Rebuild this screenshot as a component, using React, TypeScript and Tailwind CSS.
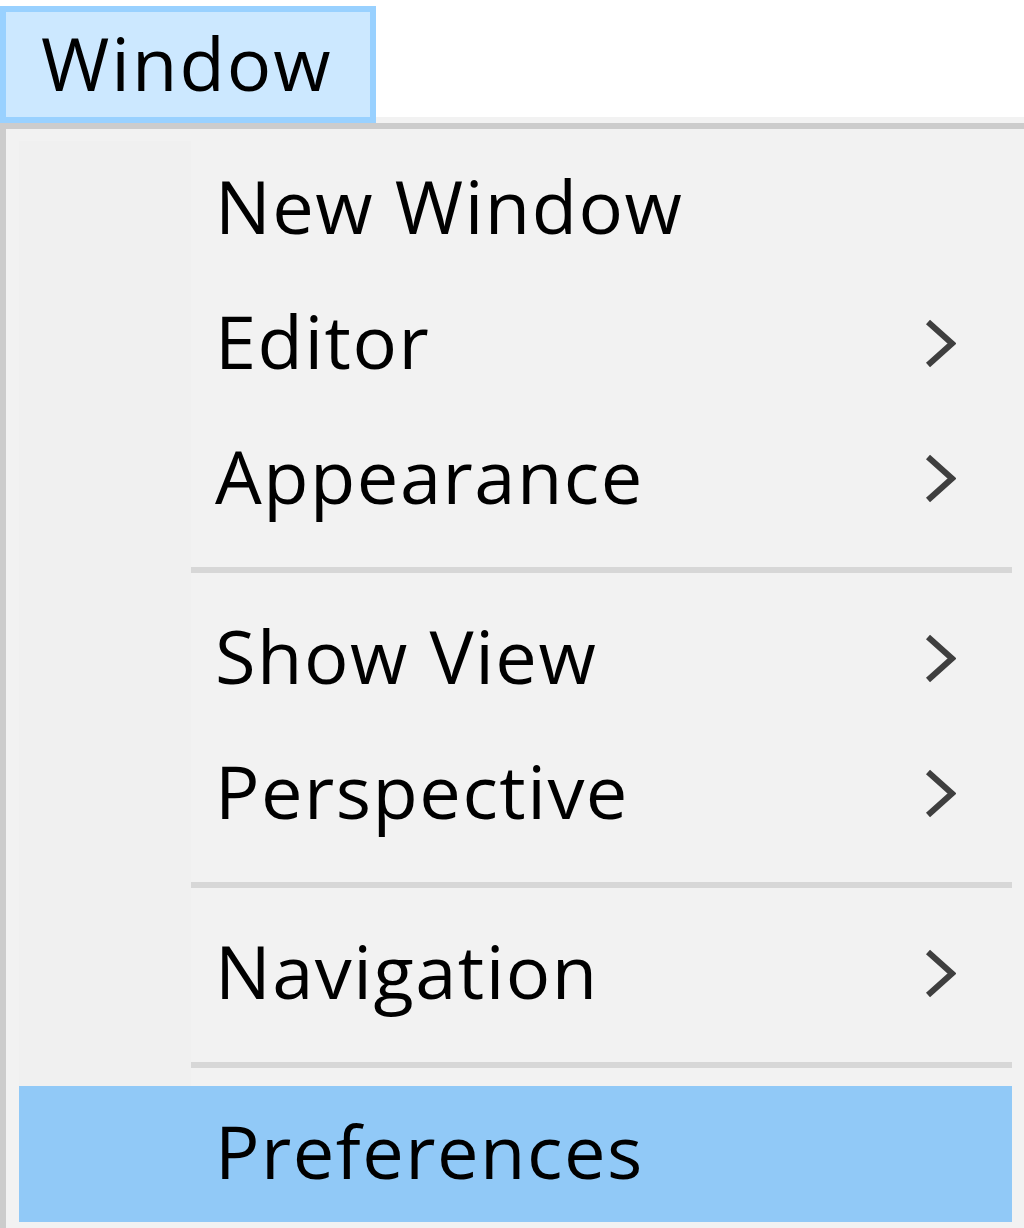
import React from "react";

type Item =
  | { kind: "item"; label: string; sub?: boolean; active?: boolean }
  | { kind: "sep" };

const items: Item[] = [
  { kind: "item", label: "New Window" },
  { kind: "item", label: "Editor", sub: true },
  { kind: "item", label: "Appearance", sub: true },
  { kind: "sep" },
  { kind: "item", label: "Show View", sub: true },
  { kind: "item", label: "Perspective", sub: true },
  { kind: "sep" },
  { kind: "item", label: "Navigation", sub: true },
  { kind: "sep" },
  { kind: "item", label: "Preferences", active: true },
];

const Chevron = () => (
  <svg width="31" height="49" viewBox="0 0 31 49" className="shrink-0">
    <polyline
      points="3,3 27,24.5 3,46"
      fill="none"
      stroke="#3f3f3f"
      strokeWidth="6"
      strokeLinejoin="miter"
    />
  </svg>
);

export default function App() {
  return (
    <div
      className="w-[1024px] h-[1228px] overflow-hidden bg-white text-black"
      style={{ fontFamily: '"Open Sans", "Noto Sans", sans-serif' }}
    >
      {/* menu bar */}
      <div className="flex items-start h-[123px]">
        <div className="mt-[6px] w-[376px] h-[117px] border-[6px] border-[#99d1ff] bg-[#cce8ff] pl-[35px] pt-[1px] text-[74px] leading-[100px] tracking-[2px]">
          Window
        </div>
        <div className="flex-1 h-full border-b-[6px] border-[#f2f2f2]" />
      </div>

      {/* dropdown */}
      <div className="border-t-[6px] border-l-[6px] border-[#cccccc] bg-[#f2f2f2] pl-[13px] pr-[12px] pt-[12px] h-[1105px]">
        {items.map((it, i) =>
          it.kind === "sep" ? (
            <div key={i} className="flex h-[45px]">
              <div className="w-[172px] bg-[#f0f0f0]" />
              <div className="flex-1 pt-[21px]">
                <div className="h-[6px] bg-[#d7d7d7]" />
              </div>
            </div>
          ) : (
            <div
              key={i}
              className={`flex items-center ${it.active ? "h-[136px] bg-[#91c9f7]" : "h-[135px]"}`}
            >
              <div className={`w-[172px] h-full ${it.active ? "" : "bg-[#f0f0f0]"}`} />
              <div className="flex-1 pl-[24px] text-[74px] leading-none pb-[6px] tracking-[1.5px]">
                {it.label}
              </div>
              <div className="w-[87px] flex items-center">
                {it.sub && <Chevron />}
              </div>
            </div>
          )
        )}
      </div>
    </div>
  );
}
